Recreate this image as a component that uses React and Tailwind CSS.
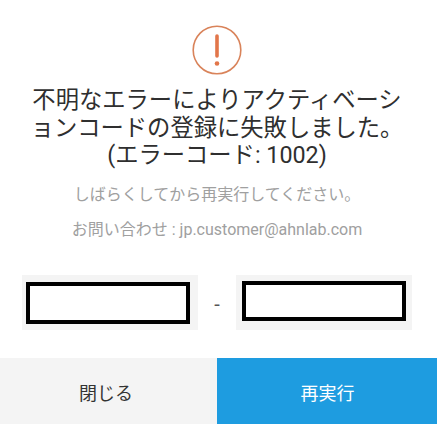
import React from 'react';

const CodeBox = ({ inner }) => (
  <div className="w-[176px] h-[55px] bg-[#f4f4f4] flex">
    <div className={inner}></div>
  </div>
);

export default function App() {
  return (
    <div className="w-[437px] h-[424px] bg-white flex flex-col font-['Roboto','Noto_Sans_CJK_JP',sans-serif]">
      <div className="flex justify-center pt-[25px] pr-[3px]">
        <svg width="50" height="50" viewBox="0 0 50 50" fill="none">
          <circle cx="25" cy="25" r="23.8" stroke="#d9835a" strokeWidth="1.6" />
          <path d="M25 11V31" stroke="#e2764a" strokeWidth="3.6" strokeLinecap="round" />
          <circle cx="25" cy="38.5" r="2.3" fill="#e2764a" />
        </svg>
      </div>
      <div className="mt-[12px] pr-[3px] text-center text-[23.3px] leading-[27.5px] text-[#2f2f2f] whitespace-nowrap">
        <p>不明なエラーによりアクティベーシ<br />ョンコードの登録に失敗しました。</p>
        <p>(エラーコード: 1002)</p>
      </div>
      <p className="mt-[15px] pr-[3px] text-center text-[16px] leading-[20px] text-[#a0a0a0]">しばらくしてから再実行してください。</p>
      <p className="mt-[15px] pr-[3px] text-center text-[16px] leading-[20px] text-[#a0a0a0]">お問い合わせ : jp.customer@ahnlab.com</p>
      <div className="mt-[35px] pl-[22px] flex items-center">
        <CodeBox inner="ml-[4px] mt-[7px] w-[164px] h-[42px] border-4 border-black bg-white" />
        <span className="w-[38px] pt-[4px] text-center text-[20px] text-[#555555]">-</span>
        <CodeBox inner="ml-[6px] mt-[6px] w-[164px] h-[40px] border-4 border-black bg-white" />
      </div>
      <div className="mt-auto h-[66px] flex text-[18px]">
        <button className="w-[217px] bg-[#f4f4f4] text-[#333333] pt-[4px] pr-[5px]">閉じる</button>
        <button className="flex-1 bg-[#1e9ce0] text-white pt-[4px] pl-[1px]">再実行</button>
      </div>
    </div>
  );
}
